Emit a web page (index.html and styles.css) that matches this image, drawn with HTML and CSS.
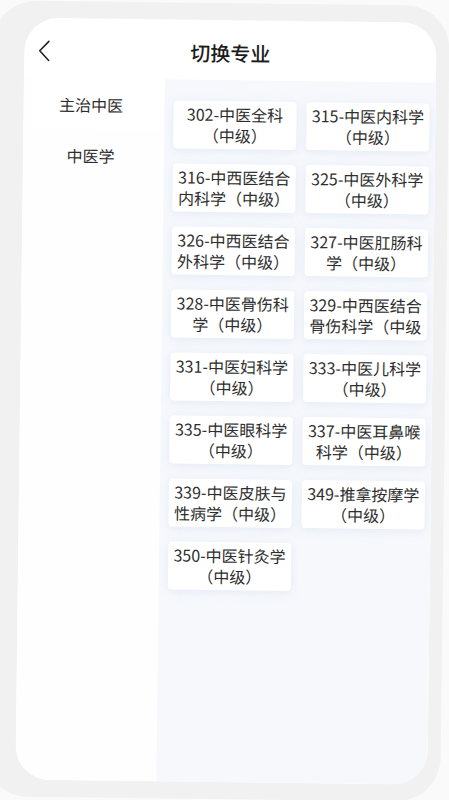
FILE: index.html
```html
<!DOCTYPE html>
<html lang="zh-CN">
<head>
<meta charset="utf-8">
<title>切换专业</title>
<link rel="stylesheet" href="styles.css">
</head>
<body>
<div class="frame">
  <div class="screen">
    <header class="topbar">
      <svg class="back" width="12" height="22" viewBox="0 0 12 22" aria-hidden="true">
        <path d="M10.5 1.5 L1.5 11 L10.5 20.5" fill="none" stroke="#222" stroke-width="1.6" stroke-linecap="round" stroke-linejoin="round"/>
      </svg>
      <h1 class="title">切换专业</h1>
      <span class="spacer"></span>
    </header>
    <div class="content">
      <nav class="side">
        <div class="side-item active">主治中医</div>
        <div class="side-item">中医学</div>
      </nav>
      <section class="panel">
        <div class="grid">
          <div class="card">302-中医全科（中级）</div>
          <div class="card">315-中医内科学（中级）</div>
          <div class="card">316-中西医结合内科学（中级）</div>
          <div class="card">325-中医外科学（中级）</div>
          <div class="card">326-中西医结合外科学（中级）</div>
          <div class="card">327-中医肛肠科学（中级）</div>
          <div class="card">328-中医骨伤科学（中级）</div>
          <div class="card clip">329-中西医结合骨伤科学（中级）</div>
          <div class="card">331-中医妇科学（中级）</div>
          <div class="card">333-中医儿科学（中级）</div>
          <div class="card">335-中医眼科学（中级）</div>
          <div class="card">337-中医耳鼻喉科学（中级）</div>
          <div class="card">339-中医皮肤与性病学（中级）</div>
          <div class="card">349-推拿按摩学（中级）</div>
          <div class="card">350-中医针灸学（中级）</div>
        </div>
      </section>
    </div>
  </div>
</div>
</body>
</html>
```
FILE: styles.css
```css
html, body {
  margin: 0;
  height: 100%;
}
body {
  background: #fafafa;
  font-family: "Noto Sans CJK SC", "Noto Sans", sans-serif;
  overflow: hidden;
}
.frame {
  width: 457px;
  height: 796px;
  margin: 3px 0 0 -12px;
  padding: 17px 13px 17px 32px;
  box-sizing: border-box;
  background: #f1f1f1;
  border-radius: 44px;
  transform: rotate(0.7deg);
}
.screen {
  height: 100%;
  background: #fff;
  border-radius: 34px;
  overflow: hidden;
  display: flex;
  flex-direction: column;
}
.topbar {
  height: 60px;
  padding-top: 6px;
  box-sizing: border-box;
  flex-shrink: 0;
  display: grid;
  grid-template-columns: 1fr auto 1fr;
  align-items: center;
}
.back {
  margin-left: 14px;
  display: block;
}
.title {
  margin: 0;
  font-size: 20px;
  font-weight: 500;
  color: #1c1c1c;
  line-height: 28px;
}
.content {
  flex: 1;
  min-height: 0;
  display: flex;
}
.side {
  width: 141px;
  flex-shrink: 0;
  padding-left: 8px;
  box-sizing: border-box;
  background: #fefefe;
}
.side-item {
  height: 51px;
  display: flex;
  align-items: center;
  justify-content: center;
  padding-right: 14px;
  font-size: 16px;
  color: #2e2e2e;
}
.side-item.active {
  background: #fff;
}
.panel {
  flex: 1;
  background: #f6f8fc;
  padding: 21px 6px 0 9px;
}
.grid {
  display: grid;
  grid-template-columns: 1fr 1fr;
  column-gap: 10px;
  row-gap: 15px;
}
.card {
  height: 48px;
  box-sizing: border-box;
  padding: 3px 2px;
  background: #fff;
  border-radius: 4px;
  box-shadow: 0 2px 8px rgba(215, 225, 240, 0.55);
  font-size: 16px;
  line-height: 21px;
  text-align: center;
  color: #2e2e2e;
  overflow: hidden;
}
.card.clip {
  line-break: anywhere;
}
```
